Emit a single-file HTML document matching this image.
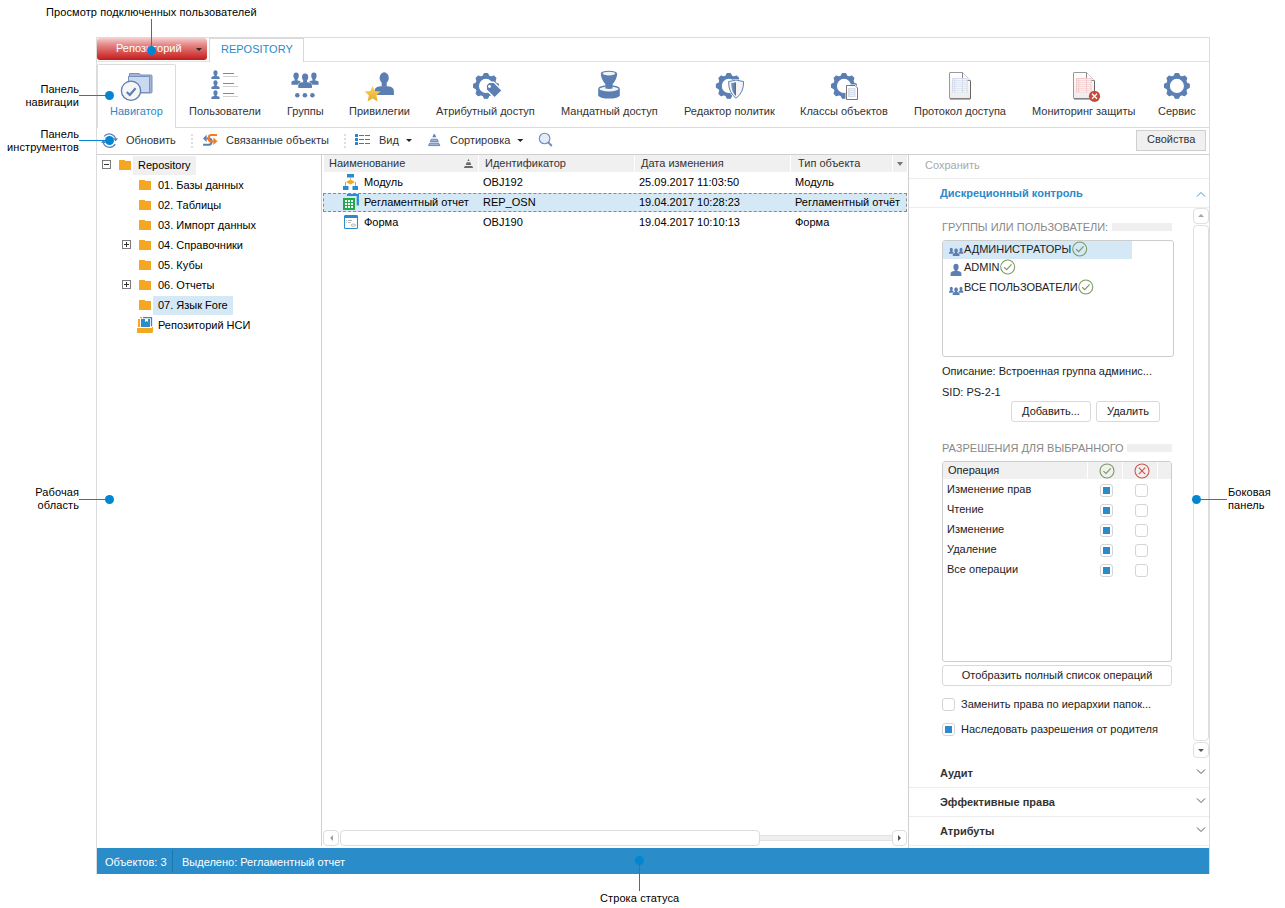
<!DOCTYPE html>
<html><head><meta charset="utf-8">
<style>
*{box-sizing:border-box}
html,body{margin:0;padding:0;width:1285px;height:908px;overflow:hidden;background:#fff;font-family:"Liberation Sans",sans-serif;font-size:11px;color:#333}
.a{position:absolute}
.t{position:absolute;line-height:13px;white-space:nowrap}
.hl{position:absolute;height:1px}
.vl{position:absolute;width:1px}
.dot{position:absolute;width:9px;height:9px;border-radius:50%;background:#0286d2}
.fold{position:absolute;width:12px;height:10px}.fold:before{content:"";position:absolute;left:0;top:0;width:6px;height:2px;background:#f5a623}.fold:after{content:"";position:absolute;left:0;top:1px;width:12px;height:9px;background:#f5a623}
.plus{position:absolute;width:9px;height:9px;border:1px solid #7b7b7b;background:#fff}.plus:before{content:"";position:absolute;left:1px;top:3px;width:5px;height:1px;background:#333}.plus:after{content:"";position:absolute;left:3px;top:1px;width:1px;height:5px;background:#333}
.btn{position:absolute;border:1px solid #d9d9d9;border-radius:3px;background:#fff;text-align:center;line-height:19px;color:#222;white-space:nowrap}
.cb{position:absolute;width:13px;height:13px;border:1px solid #d5d5d5;border-radius:3px;background:#fff}.cb.on:after{content:"";position:absolute;left:2px;top:2px;width:7px;height:7px;background:#2a8acb}
.ann{position:absolute;line-height:13px;white-space:nowrap;color:#000;letter-spacing:0.1px}
</style></head><body>

<!-- annotations -->
<div class="ann" style="left:46px;top:6px">Просмотр подключенных пользователей</div>

<!-- frame -->
<div class="a" style="left:96px;top:37px;width:1114px;height:837px;border:1px solid #dcdcdc;border-bottom:none"></div>

<!-- tab row -->
<div class="a" style="left:97px;top:38px;width:110px;height:22px;border-radius:3px;background:linear-gradient(#f6cccc,#e58a8a 30%,#d44848 70%,#c11b1b);"></div>
<div class="t" style="left:116px;top:42px;color:#fff">Репозиторий</div>
<div class="a" style="left:196px;top:48px;width:0;height:0;border-left:3px solid transparent;border-right:3px solid transparent;border-top:3px solid #2a2a2a"></div>
<div class="a" style="left:209px;top:38px;width:95px;height:24px;border:1px solid #d8d8d8;border-bottom:none;background:#fff"></div>
<div class="t" style="left:221px;top:43px;color:#2a8acb">REPOSITORY</div>
<div class="hl" style="left:97px;top:61px;width:112px;background:#e3e6e8"></div>
<div class="hl" style="left:304px;top:61px;width:905px;background:#e0e0e0"></div>

<!-- ribbon -->
<div class="hl" style="left:175px;top:127px;width:1034px;background:#dcdcdc"></div>
<div class="a" style="left:97px;top:64px;width:79px;height:64px;border:1px solid #dcdcdc;border-bottom:none;border-radius:2px 2px 0 0;background:#fff"></div>
<div class="t" style="left:110px;top:105px;color:#2a8acb">Навигатор</div>
<div class="t" style="left:189px;top:105px">Пользователи</div>
<div class="t" style="left:287px;top:105px">Группы</div>
<div class="t" style="left:349px;top:105px">Привилегии</div>
<div class="t" style="left:436px;top:105px">Атрибутный доступ</div>
<div class="t" style="left:561px;top:105px">Мандатный доступ</div>
<div class="t" style="left:684px;top:105px">Редактор политик</div>
<div class="t" style="left:800px;top:105px">Классы объектов</div>
<div class="t" style="left:914px;top:105px">Протокол доступа</div>
<div class="t" style="left:1032px;top:105px">Мониторинг защиты</div>
<div class="t" style="left:1158px;top:105px">Сервис</div>

<!-- toolbar -->
<div class="t" style="left:126px;top:134px">Обновить</div>
<div class="t" style="left:226px;top:134px">Связанные объекты</div>
<div class="t" style="left:379px;top:134px">Вид</div>
<div class="t" style="left:450px;top:134px">Сортировка</div>
<div class="a" style="left:1136px;top:130px;width:70px;height:21px;border:1px solid #cfcfcf;background:#f0f0f0"></div>
<div class="t" style="left:1147px;top:133px">Свойства</div>
<div class="hl" style="left:97px;top:154px;width:1112px;background:#d0d0d0"></div>

<!-- splitters -->
<div class="vl" style="left:321px;top:155px;height:691px;background:#d0d0d0"></div>
<div class="vl" style="left:908px;top:155px;height:693px;background:#d0d0d0"></div>


<!-- tree -->
<div class="a" style="left:102px;top:160px;width:9px;height:9px;border:1px solid #7b7b7b;background:#fff"></div>
<div class="a" style="left:104px;top:164px;width:5px;height:1px;background:#333"></div>
<div class="fold" style="left:119px;top:160px"></div>
<div class="a" style="left:133px;top:156px;width:63px;height:19px;background:#f0f0f0"></div>
<div class="t" style="left:138px;top:159px;color:#000">Repository</div>
<div class="fold" style="left:139px;top:180px"></div><div class="t" style="left:158px;top:179px;color:#000">01. Базы данных</div>
<div class="fold" style="left:139px;top:200px"></div><div class="t" style="left:158px;top:199px;color:#000">02. Таблицы</div>
<div class="fold" style="left:139px;top:220px"></div><div class="t" style="left:158px;top:219px;color:#000">03. Импорт данных</div>
<div class="plus" style="left:122px;top:240px"></div>
<div class="fold" style="left:139px;top:240px"></div><div class="t" style="left:158px;top:239px;color:#000">04. Справочники</div>
<div class="fold" style="left:139px;top:260px"></div><div class="t" style="left:158px;top:259px;color:#000">05. Кубы</div>
<div class="plus" style="left:122px;top:280px"></div>
<div class="fold" style="left:139px;top:280px"></div><div class="t" style="left:158px;top:279px;color:#000">06. Отчеты</div>
<div class="a" style="left:153px;top:296px;width:80px;height:19px;background:#d5e8f6"></div>
<div class="fold" style="left:139px;top:300px"></div><div class="t" style="left:158px;top:299px;color:#000">07. Язык Fore</div>
<div class="t" style="left:158px;top:319px;color:#000">Репозиторий НСИ</div>

<!-- list -->
<div class="a" style="left:324px;top:155px;width:154px;height:17px;background:#f0f0f0"></div>
<div class="a" style="left:479px;top:155px;width:155px;height:17px;background:#f0f0f0"></div>
<div class="a" style="left:635px;top:155px;width:155px;height:17px;background:#f0f0f0"></div>
<div class="a" style="left:791px;top:155px;width:101px;height:17px;background:#f0f0f0"></div>
<div class="a" style="left:893px;top:155px;width:14px;height:17px;background:#f0f0f0"></div>
<div class="t" style="left:329px;top:157px">Наименование</div>
<div class="t" style="left:485px;top:157px">Идентификатор</div>
<div class="t" style="left:641px;top:157px">Дата изменения</div>
<div class="t" style="left:798px;top:157px">Тип объекта</div>
<div class="a" style="left:897px;top:162px;width:0;height:0;border-left:3.5px solid transparent;border-right:3.5px solid transparent;border-top:4px solid #777"></div>
<div class="a" style="left:323px;top:193px;width:584px;height:19px;background:#d5e8f6;border:1px dashed #8a8a8a"></div>
<div class="t" style="left:364px;top:176px;color:#000">Модуль</div>
<div class="t" style="left:483px;top:176px;color:#000">OBJ192</div>
<div class="t" style="left:639px;top:176px;color:#000">25.09.2017 11:03:50</div>
<div class="t" style="left:795px;top:176px;color:#000">Модуль</div>
<div class="t" style="left:364px;top:196px;color:#000">Регламентный отчет</div>
<div class="t" style="left:483px;top:196px;color:#000">REP_OSN</div>
<div class="t" style="left:639px;top:196px;color:#000">19.04.2017 10:28:23</div>
<div class="t" style="left:795px;top:196px;color:#000">Регламентный отчёт</div>
<div class="t" style="left:364px;top:216px;color:#000">Форма</div>
<div class="t" style="left:483px;top:216px;color:#000">OBJ190</div>
<div class="t" style="left:639px;top:216px;color:#000">19.04.2017 10:10:13</div>
<div class="t" style="left:795px;top:216px;color:#000">Форма</div>
<!-- hscroll -->
<div class="a" style="left:323px;top:830px;width:16px;height:16px;border:1px solid #dcdcdc;border-radius:4px;background:#fff"></div>
<div class="a" style="left:330px;top:835px;width:0;height:0;border-top:3px solid transparent;border-bottom:3px solid transparent;border-right:3px solid #a0a0a0"></div>
<div class="a" style="left:340px;top:830px;width:420px;height:16px;border:1px solid #dcdcdc;border-radius:4px;background:#fff"></div>
<div class="a" style="left:760px;top:835px;width:132px;height:6px;background:#efefef;border-top:1px solid #e2e2e2;border-bottom:1px solid #e2e2e2"></div>
<div class="a" style="left:892px;top:830px;width:15px;height:16px;border:1px solid #dcdcdc;border-radius:4px;background:#fff"></div>
<div class="a" style="left:898px;top:835px;width:0;height:0;border-top:3px solid transparent;border-bottom:3px solid transparent;border-left:3px solid #555"></div>


<!-- side panel -->
<div class="t" style="left:925px;top:159px;color:#a8a8a8">Сохранить</div>
<div class="hl" style="left:909px;top:178px;width:300px;background:#ececec"></div>
<div class="t" style="left:940px;top:187px;color:#2a8acb;font-weight:bold">Дискреционный контроль</div>
<div class="hl" style="left:909px;top:207px;width:300px;background:#ececec"></div>
<svg class="a" style="left:1196px;top:191px" width="10" height="7"><polyline points="1,5.5 5,1.5 9,5.5" fill="none" stroke="#3d95d0" stroke-width="1"/></svg>
<!-- vscroll -->
<div class="a" style="left:1193px;top:208px;width:16px;height:16px;border:1px solid #e0e0e0;border-radius:4px;background:#fff"></div>
<div class="a" style="left:1198px;top:214px;width:0;height:0;border-left:3px solid transparent;border-right:3px solid transparent;border-bottom:3px solid #a5a5a5"></div>
<div class="a" style="left:1193px;top:225px;width:16px;height:516px;border:1px solid #e0e0e0;border-radius:4px;background:#fff"></div>
<div class="a" style="left:1193px;top:742px;width:16px;height:16px;border:1px solid #e0e0e0;border-radius:4px;background:#fff"></div>
<div class="a" style="left:1198px;top:749px;width:0;height:0;border-left:3px solid transparent;border-right:3px solid transparent;border-top:3px solid #555"></div>

<div class="t" style="left:942px;top:221px;color:#888">ГРУППЫ ИЛИ ПОЛЬЗОВАТЕЛИ:</div>
<div class="a" style="left:1112px;top:223px;width:60px;height:8px;background:#efefef"></div>
<div class="a" style="left:942px;top:240px;width:232px;height:117px;border:1px solid #cdcdcd;border-radius:3px;background:#fff"></div>
<div class="a" style="left:943px;top:241px;width:189px;height:18px;background:#d5e8f6"></div>
<div class="t" style="left:964px;top:243px;color:#222">АДМИНИСТРАТОРЫ</div>
<div class="t" style="left:964px;top:261px;color:#222">ADMIN</div>
<div class="t" style="left:964px;top:281px;color:#222">ВСЕ ПОЛЬЗОВАТЕЛИ</div>

<div class="t" style="left:942px;top:365px;color:#222">Описание: Встроенная группа админис...</div>
<div class="t" style="left:942px;top:386px;color:#222">SID: PS-2-1</div>
<div class="btn" style="left:1011px;top:401px;width:80px;height:21px">Добавить...</div>
<div class="btn" style="left:1096px;top:401px;width:64px;height:21px">Удалить</div>

<div class="t" style="left:942px;top:442px;color:#888">РАЗРЕШЕНИЯ ДЛЯ ВЫБРАННОГО</div>
<div class="a" style="left:1127px;top:444px;width:45px;height:8px;background:#efefef"></div>
<div class="a" style="left:942px;top:461px;width:230px;height:201px;border:1px solid #cdcdcd;border-radius:3px;background:#fff"></div>
<div class="a" style="left:943px;top:462px;width:144px;height:17px;background:#f0f0f0"></div>
<div class="a" style="left:1088px;top:462px;width:34px;height:17px;background:#f0f0f0"></div>
<div class="a" style="left:1123px;top:462px;width:34px;height:17px;background:#f0f0f0"></div>
<div class="a" style="left:1158px;top:462px;width:13px;height:17px;background:#f0f0f0"></div>
<div class="t" style="left:948px;top:464px;color:#222">Операция</div>
<div class="t" style="left:947px;top:483px;color:#222">Изменение прав</div>
<div class="t" style="left:947px;top:503px;color:#222">Чтение</div>
<div class="t" style="left:947px;top:523px;color:#222">Изменение</div>
<div class="t" style="left:947px;top:543px;color:#222">Удаление</div>
<div class="t" style="left:947px;top:563px;color:#222">Все операции</div>
<div class="cb on" style="left:1100px;top:484px"></div><div class="cb" style="left:1135px;top:484px"></div>
<div class="cb on" style="left:1100px;top:504px"></div><div class="cb" style="left:1135px;top:504px"></div>
<div class="cb on" style="left:1100px;top:524px"></div><div class="cb" style="left:1135px;top:524px"></div>
<div class="cb on" style="left:1100px;top:544px"></div><div class="cb" style="left:1135px;top:544px"></div>
<div class="cb on" style="left:1100px;top:564px"></div><div class="cb" style="left:1135px;top:564px"></div>
<div class="btn" style="left:942px;top:665px;width:230px;height:21px">Отобразить полный список операций</div>
<div class="cb" style="left:942px;top:698px"></div>
<div class="t" style="left:961px;top:698px;color:#222">Заменить права по иерархии папок...</div>
<div class="cb on" style="left:942px;top:723px"></div>
<div class="t" style="left:961px;top:723px;color:#222">Наследовать разрешения от родителя</div>

<div class="t" style="left:940px;top:767px;color:#333;font-weight:bold">Аудит</div>
<div class="hl" style="left:909px;top:787px;width:300px;background:#ececec"></div>
<div class="t" style="left:940px;top:796px;color:#333;font-weight:bold">Эффективные права</div>
<div class="hl" style="left:909px;top:816px;width:300px;background:#ececec"></div>
<div class="t" style="left:940px;top:825px;color:#333;font-weight:bold">Атрибуты</div>
<div class="hl" style="left:909px;top:845px;width:300px;background:#ececec"></div>
<svg class="a" style="left:1196px;top:768px" width="10" height="7"><polyline points="1,1.5 5,5.5 9,1.5" fill="none" stroke="#555" stroke-width="1"/></svg>
<svg class="a" style="left:1196px;top:797px" width="10" height="7"><polyline points="1,1.5 5,5.5 9,1.5" fill="none" stroke="#555" stroke-width="1"/></svg>
<svg class="a" style="left:1196px;top:826px" width="10" height="7"><polyline points="1,1.5 5,5.5 9,1.5" fill="none" stroke="#555" stroke-width="1"/></svg>

<!-- status bar -->
<div class="a" style="left:97px;top:848px;width:1112px;height:26px;background:#2a8dca"></div>
<div class="t" style="left:105px;top:856px;color:#fff">Объектов: 3</div>
<div class="vl" style="left:172px;top:850px;height:22px;background:#1f76ad"></div>
<div class="t" style="left:182px;top:856px;color:#fff">Выделено: Регламентный отчет</div>


<!--ICONS-->
<svg class="a" style="left:116px;top:66px" width="40" height="38" viewBox="116 66 40 38">
<path d="M129.5,73.5 h9.5 l2,1.5 h10 q1,0 1,1 v16 q0,1 -1,1 h-21.5 z" fill="#a3b4d4" stroke="#7891bd" stroke-width="1"/>
<rect x="128.5" y="76.5" width="21" height="16" fill="#cbd8f1" stroke="#7891bd" stroke-width="1"/>
<circle cx="131" cy="90.7" r="9.6" fill="#f6f6f6" stroke="#5a7db3" stroke-width="1.3"/>
<polyline points="126.8,92 129.8,95 135.6,88.2" fill="none" stroke="#5a7db3" stroke-width="2.2"/>
</svg>
<svg class="a" style="left:205px;top:66px" width="40" height="38" viewBox="205 66 40 38"><path d="M211.40,79.00 V77.65 Q211.40,76.00 214.34,76.00 H216.66 Q219.60,76.00 219.60,77.65 V79.00 Z" fill="#5b7fb3"/><ellipse cx="215.50" cy="73.00" rx="2.10" ry="2.70" fill="#5b7fb3"/><rect x="214.34" y="73.00" width="2.31" height="3.50" fill="#5b7fb3"/><rect x="223" y="73" width="11" height="1" fill="#6d8bbd"/><rect x="223" y="76" width="15" height="1" fill="#d2d2d2"/><path d="M211.40,89.00 V87.65 Q211.40,86.00 214.34,86.00 H216.66 Q219.60,86.00 219.60,87.65 V89.00 Z" fill="#5b7fb3"/><ellipse cx="215.50" cy="83.00" rx="2.10" ry="2.70" fill="#5b7fb3"/><rect x="214.34" y="83.00" width="2.31" height="3.50" fill="#5b7fb3"/><rect x="223" y="83" width="11" height="1" fill="#6d8bbd"/><rect x="223" y="86" width="15" height="1" fill="#d2d2d2"/><path d="M211.40,99.00 V97.65 Q211.40,96.00 214.34,96.00 H216.66 Q219.60,96.00 219.60,97.65 V99.00 Z" fill="#5b7fb3"/><ellipse cx="215.50" cy="93.00" rx="2.10" ry="2.70" fill="#5b7fb3"/><rect x="214.34" y="93.00" width="2.31" height="3.50" fill="#5b7fb3"/><rect x="223" y="93" width="11" height="1" fill="#6d8bbd"/><rect x="223" y="96" width="15" height="1" fill="#d2d2d2"/></svg>
<svg class="a" style="left:285px;top:66px" width="40" height="38" viewBox="285 66 40 38"><path d="M291.40,84.80 V82.82 Q291.40,80.40 294.62,80.40 H297.59 Q300.80,80.40 300.80,82.82 V84.80 Z" fill="#5b7fb3"/><ellipse cx="296.10" cy="75.80" rx="2.70" ry="3.40" fill="#5b7fb3"/><rect x="294.62" y="75.80" width="2.97" height="5.10" fill="#5b7fb3"/><path d="M309.20,84.80 V82.82 Q309.20,80.40 312.41,80.40 H315.38 Q318.60,80.40 318.60,82.82 V84.80 Z" fill="#5b7fb3"/><ellipse cx="313.90" cy="75.80" rx="2.70" ry="3.40" fill="#5b7fb3"/><rect x="312.41" y="75.80" width="2.97" height="5.10" fill="#5b7fb3"/><path d="M298.30,88.00 V85.39 Q298.30,82.20 303.40,82.20 H306.81 Q311.90,82.20 311.90,85.39 V88.00 Z" fill="#5b7fb3" stroke="#fff" stroke-width="0.9"/><ellipse cx="305.10" cy="77.10" rx="3.10" ry="3.70" fill="#5b7fb3" stroke="#fff" stroke-width="0.9"/><rect x="303.40" y="77.10" width="3.41" height="5.60" fill="#5b7fb3"/><path d="M298.30,88.00 V85.39 Q298.30,82.20 303.40,82.20 H306.81 Q311.90,82.20 311.90,85.39 V88.00 Z" fill="#5b7fb3"/><ellipse cx="305.10" cy="77.10" rx="3.10" ry="3.70" fill="#5b7fb3"/><rect x="303.40" y="77.10" width="3.41" height="5.60" fill="#5b7fb3"/><circle cx="297.3" cy="95.3" r="2.3" fill="#5b7fb3"/><circle cx="304.9" cy="95.3" r="2.3" fill="#5b7fb3"/><circle cx="312.4" cy="95.3" r="2.3" fill="#5b7fb3"/></svg>
<svg class="a" style="left:360px;top:66px" width="40" height="38" viewBox="360 66 40 38"><path d="M374.50,95.00 V91.08 Q374.50,86.30 381.67,86.30 H386.73 Q393.90,86.30 393.90,91.08 V95.00 Z" fill="#5b7fb3"/><ellipse cx="384.20" cy="77.90" rx="4.60" ry="5.60" fill="#5b7fb3"/><rect x="381.67" y="77.90" width="5.06" height="8.90" fill="#5b7fb3"/>
<defs><linearGradient id="sg" x1="0" y1="0" x2="0" y2="1"><stop offset="0" stop-color="#f9d25e"/><stop offset="1" stop-color="#e6ad2e"/></linearGradient></defs>
<polygon points="372.6,86 374.9,90.9 380.6,91.6 376.4,95.3 377.6,101.5 372.6,98.5 367.6,101.5 368.8,95.3 364.6,91.6 370.3,90.9" fill="url(#sg)"/>
</svg>
<svg class="a" style="left:468px;top:66px" width="40" height="38" viewBox="468 66 40 38">
<path d="M483.14,76.11 L484.40,73.50 L487.60,73.50 L488.86,76.11 A10.2,10.2 0 0 1 490.90,76.95 L493.64,76.01 L495.89,78.26 L494.95,81.00 A10.2,10.2 0 0 1 495.79,83.04 L498.40,84.30 L498.40,87.50 L495.79,88.76 A10.2,10.2 0 0 1 494.95,90.80 L495.89,93.54 L493.64,95.79 L490.90,94.85 A10.2,10.2 0 0 1 488.86,95.69 L487.60,98.30 L484.40,98.30 L483.14,95.69 A10.2,10.2 0 0 1 481.10,94.85 L478.36,95.79 L476.11,93.54 L477.05,90.80 A10.2,10.2 0 0 1 476.21,88.76 L473.60,87.50 L473.60,84.30 L476.21,83.04 A10.2,10.2 0 0 1 477.05,81.00 L476.11,78.26 L478.36,76.01 L481.10,76.95 A10.2,10.2 0 0 1 483.14,76.11 Z M478.40,85.90 a7.6,7.6 0 1,0 15.2,0 a7.6,7.6 0 1,0 -15.2,0 Z" fill="#5b7fb3" fill-rule="evenodd" stroke="#5b7fb3" stroke-width="1.1" stroke-linejoin="round"/>
<path d="M486.2,85 l2.8,-2.8 h5 l8.2,8.3 l-7.6,7.6 l-8.4,-8.4 z" fill="#5b7fb3" stroke="#fff" stroke-width="1.4" stroke-linejoin="round"/>
<circle cx="489.5" cy="86.5" r="1.4" fill="#fff"/>
</svg>
<svg class="a" style="left:590px;top:66px" width="40" height="38" viewBox="590 66 40 38">
<path d="M598.2,89 v6.3 a10.8,3.3 0 0 0 21.6,0 v-6.3 z" fill="#5b7fb3"/>
<ellipse cx="609" cy="89" rx="10.2" ry="3.1" fill="#f3f3f3" stroke="#5b7fb3" stroke-width="1.2"/>
<path d="M600.8,73.3 q0,5.5 4.6,11 v4.2 q3.6,0.9 7.2,0 v-4.2 q4.6,-5.5 4.6,-11 z" fill="#5b7fb3"/>
<ellipse cx="608.9" cy="73.3" rx="8" ry="2.6" fill="#5b7fb3"/>
<ellipse cx="608.9" cy="73.6" rx="6.3" ry="1.8" fill="#f3f3f3"/>
</svg>
<svg class="a" style="left:710px;top:66px" width="40" height="38" viewBox="710 66 40 38">
<path d="M725.94,76.11 L727.20,73.50 L730.40,73.50 L731.66,76.11 A10.2,10.2 0 0 1 733.70,76.95 L736.44,76.01 L738.69,78.26 L737.75,81.00 A10.2,10.2 0 0 1 738.59,83.04 L741.20,84.30 L741.20,87.50 L738.59,88.76 A10.2,10.2 0 0 1 737.75,90.80 L738.69,93.54 L736.44,95.79 L733.70,94.85 A10.2,10.2 0 0 1 731.66,95.69 L730.40,98.30 L727.20,98.30 L725.94,95.69 A10.2,10.2 0 0 1 723.90,94.85 L721.16,95.79 L718.91,93.54 L719.85,90.80 A10.2,10.2 0 0 1 719.01,88.76 L716.40,87.50 L716.40,84.30 L719.01,83.04 A10.2,10.2 0 0 1 719.85,81.00 L718.91,78.26 L721.16,76.01 L723.90,76.95 A10.2,10.2 0 0 1 725.94,76.11 Z M721.20,85.90 a7.6,7.6 0 1,0 15.2,0 a7.6,7.6 0 1,0 -15.2,0 Z" fill="#5b7fb3" fill-rule="evenodd" stroke="#5b7fb3" stroke-width="1.1" stroke-linejoin="round"/>
<defs><linearGradient id="shg" x1="0" y1="0" x2="1" y2="0"><stop offset="0" stop-color="#8aa3c6"/><stop offset="1" stop-color="#4c6a96"/></linearGradient></defs>
<path d="M728.6,81.6 q4,-0.8 7.4,-1.6 q3.8,0.8 7.6,1.6 q0.2,11 -7.6,16.6 q-7.6,-5.6 -7.4,-16.6 z" fill="#f4f4f4" stroke="#fff" stroke-width="2"/>
<path d="M728.6,81.6 q4,-0.8 7.4,-1.6 q3.8,0.8 7.6,1.6 q0.2,11 -7.6,16.6 q-7.6,-5.6 -7.4,-16.6 z" fill="#f4f4f4" stroke="#5b7fb3" stroke-width="1"/>
<path d="M731,83.2 l5,-1 v13.8 q-4.6,-4 -5,-12.8 z" fill="url(#shg)"/>
</svg>
<svg class="a" style="left:826px;top:66px" width="40" height="38" viewBox="826 66 40 38">
<path d="M841.14,76.11 L842.40,73.50 L845.60,73.50 L846.86,76.11 A10.2,10.2 0 0 1 848.90,76.95 L851.64,76.01 L853.89,78.26 L852.95,81.00 A10.2,10.2 0 0 1 853.79,83.04 L856.40,84.30 L856.40,87.50 L853.79,88.76 A10.2,10.2 0 0 1 852.95,90.80 L853.89,93.54 L851.64,95.79 L848.90,94.85 A10.2,10.2 0 0 1 846.86,95.69 L845.60,98.30 L842.40,98.30 L841.14,95.69 A10.2,10.2 0 0 1 839.10,94.85 L836.36,95.79 L834.11,93.54 L835.05,90.80 A10.2,10.2 0 0 1 834.21,88.76 L831.60,87.50 L831.60,84.30 L834.21,83.04 A10.2,10.2 0 0 1 835.05,81.00 L834.11,78.26 L836.36,76.01 L839.10,76.95 A10.2,10.2 0 0 1 841.14,76.11 Z M836.40,85.90 a7.6,7.6 0 1,0 15.2,0 a7.6,7.6 0 1,0 -15.2,0 Z" fill="#5b7fb3" fill-rule="evenodd" stroke="#5b7fb3" stroke-width="1.1" stroke-linejoin="round"/>
<path d="M846.5,85.5 h8.5 l2.5,2.5 v11.5 h-11 z" fill="#fff" stroke="#fff" stroke-width="2"/>
<path d="M846.5,85.5 h8.5 l2.5,2.5 v11.5 h-11 z" fill="#fff" stroke="#777" stroke-width="1"/>
<rect x="848" y="88" width="7.5" height="9" fill="#d3dcea"/>
<path d="M849.5,89.3 h5 M849.5,91.3 h5 M849.5,93.3 h5 M849.5,95.3 h5" stroke="#fff" stroke-width="0.8"/>
</svg>
<svg class="a" style="left:940px;top:66px" width="40" height="38" viewBox="940 66 40 38"><defs><linearGradient id="dg949" x1="0" y1="0" x2="0" y2="1"><stop offset="0" stop-color="#fff"/><stop offset="1" stop-color="#ececec"/></linearGradient></defs>
<path d="M949.5,73 q0,-0.5 0.5,-0.5 h12.5 l8,8 v17.5 q0,0.5 -0.5,0.5 h-20 q-0.5,0 -0.5,-0.5 z" fill="url(#dg949)" stroke="#9a9a9a" stroke-width="1"/>
<path d="M970.5,81 v17.5 q0,0.5 -0.5,0.5 h-20" fill="none" stroke="#666" stroke-width="1"/>
<path d="M962.5,72.5 v8 h8" fill="#fff" stroke="#8a8a8a" stroke-width="1"/>
<rect x="952" y="78" width="15.6" height="14.8" fill="#d3dcea"/><rect x="953" y="79.3" width="1.2" height="1" fill="#fff"/><rect x="955.2" y="79.3" width="6.8" height="1" fill="#fff"/><rect x="963" y="79.3" width="3.6" height="1" fill="#fff"/><rect x="953" y="81.3" width="1.2" height="1" fill="#fff"/><rect x="955.2" y="81.3" width="6.8" height="1" fill="#fff"/><rect x="963" y="81.3" width="3.6" height="1" fill="#fff"/><rect x="953" y="83.3" width="1.2" height="1" fill="#fff"/><rect x="955.2" y="83.3" width="6.8" height="1" fill="#fff"/><rect x="963" y="83.3" width="3.6" height="1" fill="#fff"/><rect x="953" y="85.3" width="1.2" height="1" fill="#fff"/><rect x="955.2" y="85.3" width="6.8" height="1" fill="#fff"/><rect x="963" y="85.3" width="3.6" height="1" fill="#fff"/><rect x="953" y="87.3" width="1.2" height="1" fill="#fff"/><rect x="955.2" y="87.3" width="6.8" height="1" fill="#fff"/><rect x="963" y="87.3" width="3.6" height="1" fill="#fff"/><rect x="953" y="89.3" width="1.2" height="1" fill="#fff"/><rect x="955.2" y="89.3" width="6.8" height="1" fill="#fff"/><rect x="963" y="89.3" width="3.6" height="1" fill="#fff"/><rect x="953" y="91.3" width="1.2" height="1" fill="#fff"/><rect x="955.2" y="91.3" width="6.8" height="1" fill="#fff"/><rect x="963" y="91.3" width="3.6" height="1" fill="#fff"/></svg>
<svg class="a" style="left:1066px;top:66px" width="40" height="38" viewBox="1066 66 40 38"><defs><linearGradient id="dg1073" x1="0" y1="0" x2="0" y2="1"><stop offset="0" stop-color="#fff"/><stop offset="1" stop-color="#ececec"/></linearGradient></defs>
<path d="M1073.5,73 q0,-0.5 0.5,-0.5 h12.5 l8,8 v17.5 q0,0.5 -0.5,0.5 h-20 q-0.5,0 -0.5,-0.5 z" fill="url(#dg1073)" stroke="#9a9a9a" stroke-width="1"/>
<path d="M1094.5,81 v17.5 q0,0.5 -0.5,0.5 h-20" fill="none" stroke="#666" stroke-width="1"/>
<path d="M1086.5,72.5 v8 h8" fill="#fff" stroke="#8a8a8a" stroke-width="1"/>
<rect x="1076" y="78" width="15.6" height="14.8" fill="#f3c9c9"/><rect x="1077" y="79.3" width="1.2" height="1" fill="#fff"/><rect x="1079.2" y="79.3" width="6.8" height="1" fill="#fff"/><rect x="1087" y="79.3" width="3.6" height="1" fill="#fff"/><rect x="1077" y="81.3" width="1.2" height="1" fill="#fff"/><rect x="1079.2" y="81.3" width="6.8" height="1" fill="#fff"/><rect x="1087" y="81.3" width="3.6" height="1" fill="#fff"/><rect x="1077" y="83.3" width="1.2" height="1" fill="#fff"/><rect x="1079.2" y="83.3" width="6.8" height="1" fill="#fff"/><rect x="1087" y="83.3" width="3.6" height="1" fill="#fff"/><rect x="1077" y="85.3" width="1.2" height="1" fill="#fff"/><rect x="1079.2" y="85.3" width="6.8" height="1" fill="#fff"/><rect x="1087" y="85.3" width="3.6" height="1" fill="#fff"/><rect x="1077" y="87.3" width="1.2" height="1" fill="#fff"/><rect x="1079.2" y="87.3" width="6.8" height="1" fill="#fff"/><rect x="1087" y="87.3" width="3.6" height="1" fill="#fff"/><rect x="1077" y="89.3" width="1.2" height="1" fill="#fff"/><rect x="1079.2" y="89.3" width="6.8" height="1" fill="#fff"/><rect x="1087" y="89.3" width="3.6" height="1" fill="#fff"/><rect x="1077" y="91.3" width="1.2" height="1" fill="#fff"/><rect x="1079.2" y="91.3" width="6.8" height="1" fill="#fff"/><rect x="1087" y="91.3" width="3.6" height="1" fill="#fff"/>
<circle cx="1094.5" cy="96.3" r="5.6" fill="#c94a3c"/>
<path d="M1092,93.8 l5,5 M1097,93.8 l-5,5" stroke="#fff" stroke-width="1.3"/></svg>
<svg class="a" style="left:1156px;top:66px" width="40" height="38" viewBox="1156 66 40 38"><path d="M1174.04,76.11 L1175.30,73.50 L1178.50,73.50 L1179.76,76.11 A10.2,10.2 0 0 1 1181.80,76.95 L1184.54,76.01 L1186.79,78.26 L1185.85,81.00 A10.2,10.2 0 0 1 1186.69,83.04 L1189.30,84.30 L1189.30,87.50 L1186.69,88.76 A10.2,10.2 0 0 1 1185.85,90.80 L1186.79,93.54 L1184.54,95.79 L1181.80,94.85 A10.2,10.2 0 0 1 1179.76,95.69 L1178.50,98.30 L1175.30,98.30 L1174.04,95.69 A10.2,10.2 0 0 1 1172.00,94.85 L1169.26,95.79 L1167.01,93.54 L1167.95,90.80 A10.2,10.2 0 0 1 1167.11,88.76 L1164.50,87.50 L1164.50,84.30 L1167.11,83.04 A10.2,10.2 0 0 1 1167.95,81.00 L1167.01,78.26 L1169.26,76.01 L1172.00,76.95 A10.2,10.2 0 0 1 1174.04,76.11 Z M1169.30,85.90 a7.6,7.6 0 1,0 15.2,0 a7.6,7.6 0 1,0 -15.2,0 Z" fill="#5b7fb3" fill-rule="evenodd" stroke="#5b7fb3" stroke-width="1.1" stroke-linejoin="round"/></svg>
<svg class="a" style="left:100px;top:130px" width="22" height="20" viewBox="100 130 22 20">
<path d="M104.2,136.3 A6.6,6.6 0 0 1 115.6,138.6" fill="none" stroke="#5b7fb3" stroke-width="1.3"/>
<polygon points="113.2,138.2 118,138.2 115.6,141.6" fill="#5b7fb3"/>
<path d="M115.2,144.2 A6.6,6.6 0 0 1 103.3,142.6" fill="none" stroke="#5b7fb3" stroke-width="1.3"/>
<polygon points="106,143 101.2,143 103.4,139.6" fill="#5b7fb3"/>
</svg>
<div class="a" style="left:191px;top:134px;width:2px;height:2px;background:#dedede"></div>
<div class="a" style="left:191px;top:138px;width:2px;height:2px;background:#dedede"></div>
<div class="a" style="left:191px;top:142px;width:2px;height:2px;background:#dedede"></div>
<div class="a" style="left:191px;top:146px;width:2px;height:2px;background:#dedede"></div>
<div class="a" style="left:344px;top:134px;width:2px;height:2px;background:#dedede"></div>
<div class="a" style="left:344px;top:138px;width:2px;height:2px;background:#dedede"></div>
<div class="a" style="left:344px;top:142px;width:2px;height:2px;background:#dedede"></div>
<div class="a" style="left:344px;top:146px;width:2px;height:2px;background:#dedede"></div>
<svg class="a" style="left:200px;top:130px" width="22" height="20" viewBox="200 130 22 20">
<path d="M206.5,138.5 h2.5 q2.5,0 2.5,2.5 v1 q0,2.8 -2.8,2.8 h-5.6" fill="none" stroke="#5b7fb3" stroke-width="2"/>
<polygon points="203,138.4 206.6,134.8 206.6,142" fill="#5b7fb3"/>
<path d="M217,134.9 h-5.8 q-2.5,0 -2.5,2.5 v1 q0,3 2.5,3 h2.5" fill="none" stroke="#f47b20" stroke-width="2"/>
<polygon points="217.4,141.3 213.4,137.6 213.4,145" fill="#f47b20"/>
</svg>
<svg class="a" style="left:352px;top:130px" width="22" height="20" viewBox="352 130 22 20">
<rect x="355" y="134" width="3" height="3" rx="0.5" fill="#1f85c6"/><rect x="355" y="138" width="3" height="3" rx="0.5" fill="#1f85c6"/><rect x="355" y="142" width="3" height="3" rx="0.5" fill="#1f85c6"/>
<rect x="359" y="135" width="5" height="1" fill="#1f85c6"/><rect x="365" y="135" width="5" height="1" fill="#1f85c6"/>
<rect x="359" y="139" width="5" height="1" fill="#1f85c6"/><rect x="365" y="139" width="5" height="1" fill="#1f85c6"/>
<rect x="359" y="143" width="5" height="1" fill="#1f85c6"/><rect x="365" y="143" width="5" height="1" fill="#1f85c6"/>
</svg>
<svg class="a" style="left:404px;top:136px" width="10" height="8" viewBox="404 136 10 8"><polygon points="406,139 412,139 409,142" fill="#222"/></svg>
<svg class="a" style="left:515px;top:136px" width="10" height="8" viewBox="515 136 10 8"><polygon points="517.3,139 523.3,139 520.3,142" fill="#222"/></svg>
<svg class="a" style="left:426px;top:131px" width="16" height="17" viewBox="426 131 16 17">
<path d="M432.3,137.3 l1.6,-3.2 h0.8 l1.6,3.2 z" fill="#5b7fb3"/>
<path d="M430.3,141.6 l1,-2.4 h6 l1,2.4 z" fill="#9fb4d4" stroke="#5b7fb3" stroke-width="0.9"/>
<path d="M428.6,145.6 l1,-2.4 h9.2 l1,2.4 z" fill="#9fb4d4" stroke="#5b7fb3" stroke-width="0.9"/>
</svg>
<svg class="a" style="left:536px;top:131px" width="18" height="18" viewBox="536 131 18 18">
<circle cx="544.6" cy="138.5" r="5.3" fill="#e4ecf8" stroke="#6a8cc0" stroke-width="1.1"/>
<path d="M548.4,142.4 l3.4,3.6" stroke="#6a8cc0" stroke-width="2"/>
</svg>
<svg class="a" style="left:460px;top:156px" width="16" height="14" viewBox="460 156 16 14"><polygon points="467.4,161 468.5,158.7 469.6,161" fill="#6a6a6a"/><polygon points="465.8,164.9 466.7,162.3 470.3,162.3 471.2,164.9" fill="#6a6a6a"/><polygon points="463.8,168 464.8,165.9 472.2,165.9 473.2,168" fill="#6a6a6a"/></svg>
<svg class="a" style="left:136px;top:315px" width="18" height="19" viewBox="136 315 18 19">
<rect x="140" y="317" width="2" height="1.4" fill="#f5a623"/>
<path d="M143,317.7 h8.5 v8.5" fill="none" stroke="#2b8ccd" stroke-width="1.3"/>
<rect x="138" y="319" width="2" height="8" fill="#f5a623"/>
<path d="M141,319 h4 v3 l1.5,-1 l1.5,1 v-3 h2 v8 h-9 z" fill="#2b8ccd"/>
<path d="M137,328 h14.5 l1.5,-1.5 v5.5 l-1,1 h-15 z" fill="#f5a623"/>
</svg>
<svg class="a" style="left:342px;top:173px" width="18" height="18" viewBox="342 173 18 18">
<rect x="347" y="174" width="7" height="3.5" fill="#2a8bcd"/>
<path d="M350.5,177.5 v2 M345.5,182 v4 M355.5,182 v4" stroke="#aaa" stroke-width="1"/>
<polygon points="346,182 350.5,179.6 355,182 350.5,184.4" fill="#f5a623"/>
<rect x="343" y="186" width="5.5" height="4" fill="#2a8bcd"/>
<rect x="352.5" y="186" width="5.5" height="4" fill="#2a8bcd"/>
</svg>
<svg class="a" style="left:342px;top:193px" width="18" height="18" viewBox="342 193 18 18">
<path d="M347,195 h10.8 v10.6" fill="none" stroke="#2a8bcd" stroke-width="2.2"/>
<rect x="343" y="198" width="12" height="12" fill="#22a94b"/>
<path d="M345,200 h2 v2 h-2z M348,200 h2 v2 h-2z M351,200 h2 v2 h-2z M345,203 h2 v2 h-2z M348,203 h2 v2 h-2z M351,203 h2 v2 h-2z M345,206 h2 v2 h-2z M348,206 h2 v2 h-2z M351,206 h2 v2 h-2z" fill="#fff"/>
</svg>
<svg class="a" style="left:342px;top:213px" width="18" height="18" viewBox="342 213 18 18">
<rect x="344.5" y="215.5" width="13" height="13" rx="1" fill="#fff" stroke="#2a8bcd" stroke-width="1.1"/>
<rect x="344.5" y="215.5" width="13" height="2.5" fill="#2a8bcd"/>
<path d="M346.3,220.5 h0.8 M348,220.5 h4 M346.3,222.5 h0.8 M348,222.5 h2.5" stroke="#999" stroke-width="0.8"/>
<rect x="351.3" y="224.2" width="4.2" height="2" rx="1" fill="none" stroke="#999" stroke-width="0.7"/>
</svg>
<svg class="a" style="left:946px;top:244px" width="20" height="14" viewBox="946 244 20 14"><path d="M949.00,253.80 V252.77 Q949.00,251.50 950.47,251.50 H952.12 Q953.60,251.50 953.60,252.77 V253.80 Z" fill="#5b7fb3"/><ellipse cx="951.30" cy="249.60" rx="1.50" ry="1.90" fill="#5b7fb3"/><rect x="950.47" y="249.60" width="1.65" height="2.40" fill="#5b7fb3"/><path d="M958.70,253.80 V252.77 Q958.70,251.50 960.17,251.50 H961.83 Q963.30,251.50 963.30,252.77 V253.80 Z" fill="#5b7fb3"/><ellipse cx="961.00" cy="249.60" rx="1.50" ry="1.90" fill="#5b7fb3"/><rect x="960.17" y="249.60" width="1.65" height="2.40" fill="#5b7fb3"/><path d="M952.80,256.00 V254.65 Q952.80,253.00 955.17,253.00 H957.03 Q959.40,253.00 959.40,254.65 V256.00 Z" fill="#5b7fb3" stroke="#d5e8f6" stroke-width="0.7"/><ellipse cx="956.10" cy="250.70" rx="1.70" ry="2.10" fill="#5b7fb3" stroke="#d5e8f6" stroke-width="0.7"/><rect x="955.17" y="250.70" width="1.87" height="2.80" fill="#5b7fb3"/><path d="M952.80,256.00 V254.65 Q952.80,253.00 955.17,253.00 H957.03 Q959.40,253.00 959.40,254.65 V256.00 Z" fill="#5b7fb3"/><ellipse cx="956.10" cy="250.70" rx="1.70" ry="2.10" fill="#5b7fb3"/><rect x="955.17" y="250.70" width="1.87" height="2.80" fill="#5b7fb3"/></svg>
<svg class="a" style="left:946px;top:262px" width="20" height="16" viewBox="946 262 20 16"><path d="M950.60,276.00 V273.75 Q950.60,271.00 954.57,271.00 H957.43 Q961.40,271.00 961.40,273.75 V276.00 Z" fill="#5b7fb3"/><ellipse cx="956.00" cy="267.00" rx="2.60" ry="3.20" fill="#5b7fb3"/><rect x="954.57" y="267.00" width="2.86" height="4.50" fill="#5b7fb3"/></svg>
<svg class="a" style="left:946px;top:283px" width="20" height="14" viewBox="946 283 20 14"><path d="M949.00,292.80 V291.76 Q949.00,290.50 950.47,290.50 H952.12 Q953.60,290.50 953.60,291.76 V292.80 Z" fill="#5b7fb3"/><ellipse cx="951.30" cy="288.60" rx="1.50" ry="1.90" fill="#5b7fb3"/><rect x="950.47" y="288.60" width="1.65" height="2.40" fill="#5b7fb3"/><path d="M958.70,292.80 V291.76 Q958.70,290.50 960.17,290.50 H961.83 Q963.30,290.50 963.30,291.76 V292.80 Z" fill="#5b7fb3"/><ellipse cx="961.00" cy="288.60" rx="1.50" ry="1.90" fill="#5b7fb3"/><rect x="960.17" y="288.60" width="1.65" height="2.40" fill="#5b7fb3"/><path d="M952.80,295.00 V293.65 Q952.80,292.00 955.17,292.00 H957.03 Q959.40,292.00 959.40,293.65 V295.00 Z" fill="#5b7fb3" stroke="#d5e8f6" stroke-width="0.7"/><ellipse cx="956.10" cy="289.70" rx="1.70" ry="2.10" fill="#5b7fb3" stroke="#d5e8f6" stroke-width="0.7"/><rect x="955.17" y="289.70" width="1.87" height="2.80" fill="#5b7fb3"/><path d="M952.80,295.00 V293.65 Q952.80,292.00 955.17,292.00 H957.03 Q959.40,292.00 959.40,293.65 V295.00 Z" fill="#5b7fb3"/><ellipse cx="956.10" cy="289.70" rx="1.70" ry="2.10" fill="#5b7fb3"/><rect x="955.17" y="289.70" width="1.87" height="2.80" fill="#5b7fb3"/></svg>
<svg class="a" style="left:1070px;top:240px" width="20" height="20" viewBox="1070 240 20 20"><circle cx="1079.7" cy="249" r="7" fill="none" stroke="#7d9a62" stroke-width="1.05"/><polyline points="1076.1000000000001,249.2 1078.7,251.6 1083.5,246.4" fill="none" stroke="#7d9a62" stroke-width="1.2"/></svg>
<svg class="a" style="left:998px;top:258px" width="20" height="20" viewBox="998 258 20 20"><circle cx="1007.7" cy="267" r="7" fill="none" stroke="#7d9a62" stroke-width="1.05"/><polyline points="1004.1,267.2 1006.7,269.6 1011.5,264.4" fill="none" stroke="#7d9a62" stroke-width="1.2"/></svg>
<svg class="a" style="left:1076px;top:278px" width="20" height="20" viewBox="1076 278 20 20"><circle cx="1085.8" cy="287" r="7" fill="none" stroke="#7d9a62" stroke-width="1.05"/><polyline points="1082.2,287.2 1084.8,289.6 1089.6,284.4" fill="none" stroke="#7d9a62" stroke-width="1.2"/></svg>
<svg class="a" style="left:1097px;top:461px" width="20" height="20" viewBox="1097 461 20 20"><circle cx="1107" cy="470.9" r="7" fill="none" stroke="#7d9a62" stroke-width="1.05"/><polyline points="1103.4,471.09999999999997 1106,473.5 1110.8,468.29999999999995" fill="none" stroke="#7d9a62" stroke-width="1.2"/></svg>
<svg class="a" style="left:1132px;top:461px" width="20" height="20" viewBox="1132 461 20 20"><circle cx="1142" cy="470.9" r="7" fill="none" stroke="#cf564c" stroke-width="1.05"/><path d="M1138.8,467.7 l6.4,6.4 M1145.2,467.7 l-6.4,6.4" stroke="#cf564c" stroke-width="1.15"/></svg>
<!--/ICONS-->
<!-- annotation overlays -->
<div class="ann" style="left:0;top:83px;width:79px;text-align:right">Панель<br>навигации</div>
<div class="ann" style="left:0;top:128px;width:79px;text-align:right">Панель<br>инструментов</div>
<div class="ann" style="left:0;top:486px;width:79px;text-align:right">Рабочая<br>область</div>
<div class="ann" style="left:1228px;top:486px">Боковая<br>панель</div>
<div class="ann" style="left:600px;top:892px">Строка статуса</div>
<div class="vl" style="left:151px;top:19px;height:30px;background:#0286d2"></div>
<div class="dot" style="left:147px;top:46px"></div>
<div class="hl" style="left:79px;top:95px;width:28px;background:#0286d2"></div>
<div class="dot" style="left:105px;top:91px"></div>
<div class="hl" style="left:79px;top:140px;width:28px;background:#0286d2"></div>
<div class="dot" style="left:105px;top:136px"></div>
<div class="hl" style="left:79px;top:499px;width:28px;background:#0286d2"></div>
<div class="dot" style="left:105px;top:495px"></div>
<div class="hl" style="left:1198px;top:499px;width:29px;background:#0286d2"></div>
<div class="dot" style="left:1192px;top:495px"></div>
<div class="vl" style="left:639px;top:862px;height:29px;background:#0286d2"></div>
<div class="dot" style="left:635px;top:856px"></div>

</body></html>
